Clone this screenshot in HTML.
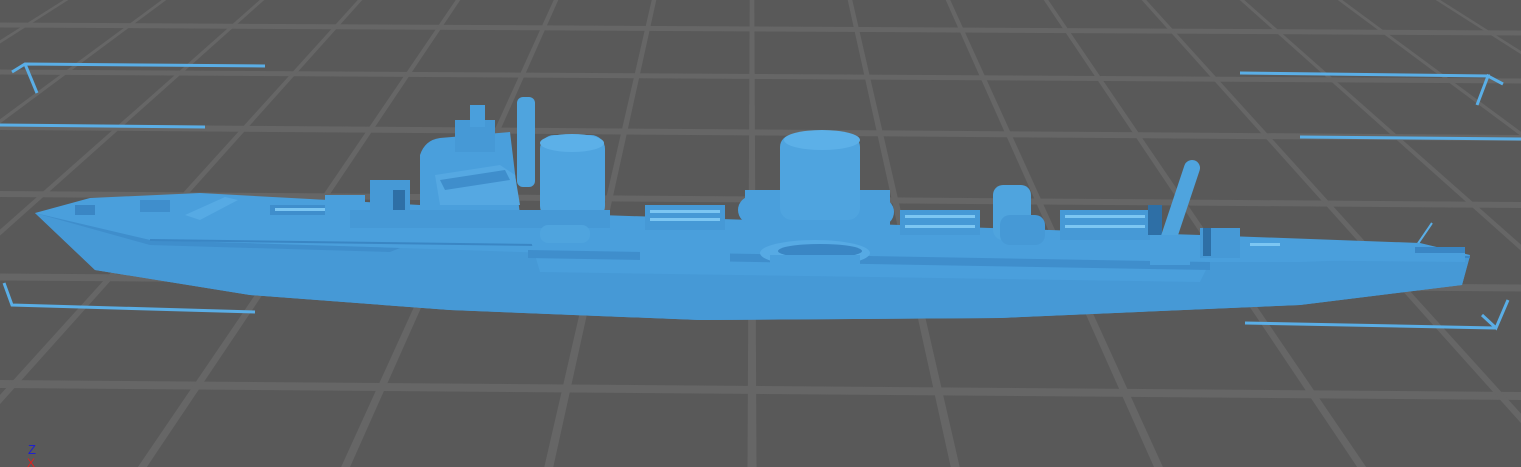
<!DOCTYPE html>
<html><head><meta charset="utf-8"><style>
html,body{margin:0;padding:0;background:#595959;overflow:hidden}
svg{display:block}
</style></head><body>
<svg width="1521" height="467" viewBox="0 0 1521 467" xmlns="http://www.w3.org/2000/svg">
<rect width="1521" height="467" fill="#595959"/>
<g stroke="#666666" fill="none">
  <line x1="0" y1="25" x2="1521" y2="33" stroke-width="5"/>
  <line x1="0" y1="72" x2="1521" y2="81" stroke-width="5"/>
  <line x1="0" y1="127" x2="1521" y2="138" stroke-width="6"/>
  <line x1="0" y1="194" x2="1521" y2="205" stroke-width="6"/>
  <line x1="0" y1="277" x2="1521" y2="288" stroke-width="7"/>
  <line x1="0" y1="384" x2="1521" y2="396" stroke-width="8"/>
</g>
<g fill="#666666" id="persp"></g>
<script>
(function(){
  var g=document.getElementById('persp');
  var vx=752,vy=-435;
  for(var k=-14;k<=14;k++){
    var f=function(y){return vx+98*k*(y-vy)/(0-vy);};
    var w0=2.3,w1=4.5;
    var p=document.createElementNS('http://www.w3.org/2000/svg','polygon');
    p.setAttribute('points',(f(0)-w0)+',0 '+(f(0)+w0)+',0 '+(f(467)+w1)+',467 '+(f(467)-w1)+',467');
    g.appendChild(p);
  }
})();
</script>
<!-- blue brackets -->
<g stroke="#5aaee6" stroke-width="3" fill="none">
  <polyline points="12,72 25,64 265,66"/>
  <line x1="25" y1="64" x2="37" y2="93"/>
  <line x1="0" y1="125" x2="205" y2="127"/>
  <polyline points="4,283 12,305 255,312"/>
  <line x1="1240" y1="73" x2="1490" y2="76"/>
  <polyline points="1477,105 1488,76 1503,84"/>
  <line x1="1300" y1="137" x2="1521" y2="139"/>
  <line x1="1245" y1="323" x2="1495" y2="328"/>
  <polyline points="1482,315 1496,328 1508,300"/>
  <line x1="1417" y1="245" x2="1432" y2="223" stroke-width="2"/>
</g>
<!-- ship -->
<g>
  <polygon fill="#4a9fdc" points="35,213 90,198 200,193 420,205 600,215 900,225 1200,235 1420,243 1470,255 1462,285 1300,305 1000,318 700,320 450,310 250,295 95,270"/>
  <polygon fill="#4699d6" points="35,213 150,240 400,248 700,258 1000,262 1300,262 1470,256 1462,285 1300,305 1000,318 700,320 450,310 250,295 95,270"/>
  <polygon fill="#3f8ecc" points="35,213 150,240 400,248 390,252 150,245"/>
  <line x1="150" y1="240" x2="1470" y2="257" stroke="#3a86c4" stroke-width="2"/>
  <rect x="140" y="200" width="30" height="12" fill="#3f8ecc"/>
  <rect x="75" y="205" width="20" height="10" fill="#3a86c4"/>
  <polygon fill="#56aae4" points="185,215 225,197 238,200 200,220"/>
  <rect x="270" y="205" width="60" height="10" fill="#3f8ecc"/>
  <rect x="275" y="208" width="50" height="3" fill="#7cc6f2"/>
  <rect x="325" y="195" width="40" height="25" fill="#4a9fdc"/>
  <rect x="370" y="180" width="40" height="38" fill="#4699d6"/>
  <rect x="393" y="190" width="12" height="25" fill="#2e6fa6"/>
  <path fill="#4a9fdc" d="M420,215 L420,155 Q425,140 440,138 L510,132 L520,215 Z"/>
  <path fill="#55a8e2" d="M435,175 L500,165 L515,175 L520,205 L440,205 Z"/>
  <path fill="#3f8ecc" d="M440,180 L505,170 L510,180 L445,190 Z"/>
  <rect x="455" y="120" width="40" height="32" fill="#4699d6"/>
  <rect x="470" y="105" width="15" height="22" fill="#4a9fdc"/>
  <rect x="517" y="97" width="18" height="90" rx="6" fill="#4fa4de"/>
  <rect x="540" y="135" width="65" height="85" rx="14" fill="#4fa4df"/>
  <ellipse cx="572" cy="143" rx="32" ry="9" fill="#5cb0e8"/>
  <rect x="350" y="210" width="260" height="18" fill="#4699d6"/>
  <polygon fill="#4a9fdc" points="530,238 540,228 1200,240 1210,262 1200,282 540,272"/>
  <polygon fill="#3f8ecc" points="528,250 1210,262 1210,270 528,258"/>
  <rect x="540" y="225" width="50" height="18" rx="8" fill="#4fa4de"/>
  <rect x="645" y="205" width="80" height="25" fill="#4699d6"/>
  <rect x="650" y="210" width="70" height="3" fill="#7cc6f2"/>
  <rect x="650" y="218" width="70" height="3" fill="#7cc6f2"/>
  <rect x="640" y="230" width="90" height="40" fill="#4a9fdc"/>
  <circle cx="752" cy="210" r="14" fill="#4a9fdc"/>
  <circle cx="880" cy="212" r="14" fill="#4a9fdc"/>
  <rect x="745" y="190" width="145" height="50" fill="#4a9fdc"/>
  <rect x="780" y="135" width="80" height="85" rx="12" fill="#4fa4df"/>
  <ellipse cx="822" cy="140" rx="38" ry="10" fill="#5cb0e8"/>
  <ellipse cx="815" cy="253" rx="55" ry="13" fill="#56aae4"/>
  <ellipse cx="820" cy="251" rx="42" ry="7" fill="#3a86c4"/>
  <rect x="770" y="255" width="90" height="20" fill="#4a9fdc"/>
  <rect x="900" y="210" width="80" height="25" fill="#4699d6"/>
  <rect x="905" y="215" width="70" height="3" fill="#7cc6f2"/>
  <rect x="905" y="225" width="70" height="3" fill="#7cc6f2"/>
  <rect x="993" y="185" width="38" height="55" rx="10" fill="#4fa4de"/>
  <rect x="1000" y="215" width="45" height="30" rx="10" fill="#4699d6"/>
  <rect x="1060" y="210" width="90" height="30" fill="#4699d6"/>
  <rect x="1065" y="215" width="80" height="3" fill="#7cc6f2"/>
  <rect x="1065" y="225" width="80" height="3" fill="#7cc6f2"/>
  <rect x="1148" y="205" width="14" height="30" fill="#2e6fa6"/>
  <line x1="1168" y1="240" x2="1192" y2="168" stroke="#4fa4de" stroke-width="16" stroke-linecap="round"/>
  <rect x="1150" y="235" width="40" height="30" fill="#4a9fdc"/>
  <rect x="1200" y="228" width="40" height="30" fill="#4699d6"/>
  <rect x="1203" y="228" width="8" height="28" fill="#2e6fa6"/>
  <polygon fill="#4a9fdc" points="1240,238 1420,245 1465,252 1465,262 1240,260"/>
  <rect x="1250" y="243" width="30" height="3" fill="#7cc6f2"/>
  <rect x="1415" y="247" width="50" height="6" fill="#3a86c4"/>
</g>
<text x="28" y="454" font-family="Liberation Sans, sans-serif" font-size="13" fill="#2020d0">Z</text>
<text x="27" y="467" font-family="Liberation Sans, sans-serif" font-size="12" fill="#e02020">X</text>
</svg>
</body></html>
